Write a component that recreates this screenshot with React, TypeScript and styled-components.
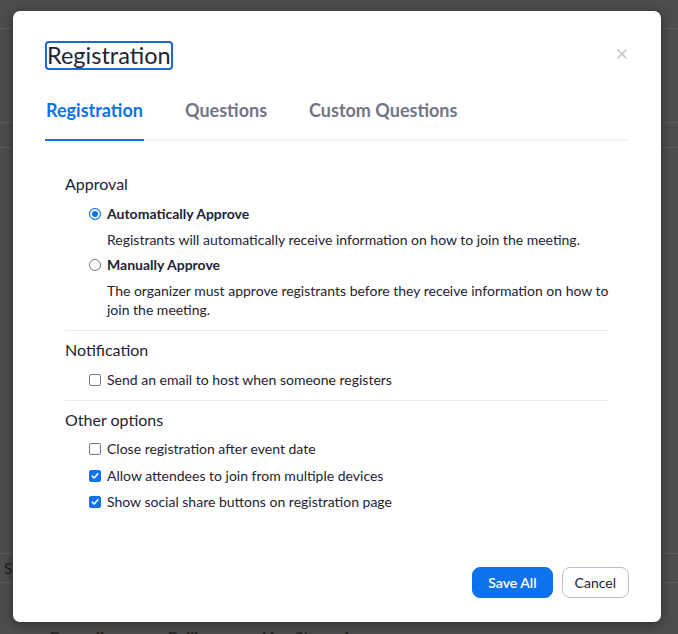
import React from 'react';
import styled, { createGlobalStyle } from 'styled-components';

const GlobalStyle = createGlobalStyle`
  html, body {
    margin: 0;
    padding: 0;
    background: #4d4d4d;
  }
  body {
    font-family: Lato, "Open Sans", "Liberation Sans", sans-serif;
    -webkit-font-smoothing: antialiased;
  }
`;

const Screen = styled.div`
  position: relative;
  width: 678px;
  height: 634px;
  overflow: hidden;
  background: #4e4e4e;
`;

/* dimmed page behind the dialog */
const BgRow = styled.div<{ $h: number; $line?: boolean; $bottom?: boolean }>`
  height: ${(p) => p.$h}px;
  box-sizing: border-box;
  border-bottom: ${(p) => (p.$line ? '1px solid #5e5e5e' : 'none')};
  display: flex;
  align-items: ${(p) => (p.$bottom ? 'flex-start' : 'center')};
  gap: 46px;
  padding-left: ${(p) => (p.$bottom ? 50 : 4)}px;
  padding-top: ${(p) => (p.$bottom ? 44 : 0)}px;
  font-size: 15px;
  color: #1f1f1f;
`;

const BgTab = styled.span`
  font-size: 16px;
  font-weight: 700;
  line-height: 20px;
  color: #262626;
`;

const Modal = styled.div`
  position: absolute;
  top: 11px;
  left: 13px;
  width: 648px;
  height: 611px;
  box-sizing: border-box;
  padding: 30px 32px 24px;
  background: #fff;
  border-radius: 7px;
  box-shadow: 0 2px 14px rgba(0, 0, 0, 0.45);
  display: flex;
  flex-direction: column;
  color: #232333;
`;

const Header = styled.div`
  display: flex;
  justify-content: space-between;
  align-items: flex-start;
`;

const Title = styled.h1`
  margin: 0;
  display: inline-block;
  font-size: 23.5px;
  font-weight: 400;
  line-height: 25px;
  padding: 0;
  border: 2px solid #1a66d2;
  border-radius: 4px;
  color: #232333;
`;

const Close = styled.button`
  border: none;
  background: none;
  padding: 0;
  margin: 7px 1px 0 0;
  width: 12px;
  height: 12px;
  display: flex;
  cursor: pointer;
`;

const TabBar = styled.div`
  margin-top: 17px;
  display: flex;
  gap: 40px;
  border-bottom: 2px solid #f2f2f4;
`;

const Tab = styled.div<{ $active?: boolean }>`
  font-size: 18px;
  line-height: 22px;
  font-weight: 700;
  padding: 12px 1px 18px;
  margin-bottom: -2px;
  color: ${(p) => (p.$active ? '#0e72ed' : '#747487')};
  border-bottom: 2px solid ${(p) => (p.$active ? '#0e72ed' : 'transparent')};
`;

const Body = styled.div`
  margin: 33px 20px 0;
`;

const Section = styled.div<{ $first?: boolean }>`
  padding: ${(p) => (p.$first ? '0 0 11px' : '9px 0 10px')};
  border-top: ${(p) => (p.$first ? 'none' : '1px solid #ebebee')};
`;

const SectionTitle = styled.div<{ $mb?: number }>`
  font-size: 16px;
  line-height: 20px;
  margin-bottom: ${(p) => p.$mb ?? 10}px;
`;

const Option = styled.label<{ $bold?: boolean; $gap?: number }>`
  display: flex;
  align-items: center;
  gap: 6px;
  margin-left: 24px;
  margin-top: ${(p) => p.$gap ?? 0}px;
  font-size: 14px;
  line-height: 20px;
  font-weight: ${(p) => (p.$bold ? 700 : 400)};
`;

const Desc = styled.div`
  margin: 6px 0 0 42px;
  font-size: 14px;
  line-height: 19px;
`;

const RadioDot = styled.span<{ $on?: boolean }>`
  width: 12px;
  height: 12px;
  box-sizing: border-box;
  border-radius: 50%;
  border: 1px solid ${(p) => (p.$on ? '#0e72ed' : '#747487')};
  background: ${(p) => (p.$on ? '#0e72ed' : '#fff')};
  box-shadow: ${(p) => (p.$on ? 'inset 0 0 0 2px #fff' : 'none')};
  flex: none;
`;

const Box = styled.span<{ $on?: boolean }>`
  width: 12px;
  height: 12px;
  box-sizing: border-box;
  border-radius: 2px;
  border: 1px solid ${(p) => (p.$on ? '#0e72ed' : '#747487')};
  background: ${(p) => (p.$on ? '#0e72ed' : '#fff')};
  display: flex;
  align-items: center;
  justify-content: center;
  flex: none;
`;

const Footer = styled.div`
  margin-top: auto;
  display: flex;
  justify-content: flex-end;
  gap: 9px;
`;

const Button = styled.button<{ $primary?: boolean }>`
  height: 31px;
  box-sizing: border-box;
  padding: 0 ${(p) => (p.$primary ? 15 : 12)}px;
  border-radius: 8px;
  font-family: inherit;
  font-size: 14px;
  font-weight: ${(p) => (p.$primary ? 600 : 400)};
  border: 1px solid ${(p) => (p.$primary ? '#0e72ed' : '#bdbdcc')};
  background: ${(p) => (p.$primary ? '#0e72ed' : '#fff')};
  color: ${(p) => (p.$primary ? '#fff' : '#232333')};
  cursor: pointer;
`;

const Check = () => (
  <svg width="8" height="8" viewBox="0 0 8 8">
    <path d="M1.2 4.2 L3.2 6 L6.8 1.8" fill="none" stroke="#fff" strokeWidth="1.6" strokeLinecap="round" strokeLinejoin="round" />
  </svg>
);

const CheckOption: React.FC<{ on?: boolean; gap?: number; children: React.ReactNode }> = ({ on, gap, children }) => (
  <Option $gap={gap}>
    <Box $on={on}>{on && <Check />}</Box>
    {children}
  </Option>
);

const App: React.FC = () => {
  return (
    <Screen>
      <GlobalStyle />
      <BgRow $h={29} $line />
      <BgRow $h={94} $line />
      <BgRow $h={25} $line />
      <BgRow $h={406} $line />
      <BgRow $h={29} $line>S</BgRow>
      <BgRow $h={80} $bottom>
        <BgTab>Recording</BgTab>
        <BgTab>Polling</BgTab>
        <BgTab>Live Streaming</BgTab>
      </BgRow>

      <Modal>
        <Header>
          <Title>Registration</Title>
          <Close aria-label="close">
            <svg width="12" height="12" viewBox="0 0 12 12">
              <path d="M2 2 L10 10 M10 2 L2 10" stroke="#c4c4c8" strokeWidth="1.6" strokeLinecap="round" />
            </svg>
          </Close>
        </Header>

        <TabBar>
          <Tab $active>Registration</Tab>
          <Tab>Questions</Tab>
          <Tab>Custom Questions</Tab>
        </TabBar>

        <Body>
          <Section $first>
            <SectionTitle>Approval</SectionTitle>
            <Option $bold>
              <RadioDot $on />
              Automatically Approve
            </Option>
            <Desc>Registrants will automatically receive information on how to join the meeting.</Desc>
            <Option $bold $gap={6}>
              <RadioDot />
              Manually Approve
            </Option>
            <Desc>
              The organizer must approve registrants before they receive information on how to join the meeting.
            </Desc>
          </Section>

          <Section>
            <SectionTitle>Notification</SectionTitle>
            <CheckOption>Send an email to host when someone registers</CheckOption>
          </Section>

          <Section>
            <SectionTitle $mb={9}>Other options</SectionTitle>
            <CheckOption>Close registration after event date</CheckOption>
            <CheckOption on gap={7}>Allow attendees to join from multiple devices</CheckOption>
            <CheckOption on gap={6}>Show social share buttons on registration page</CheckOption>
          </Section>
        </Body>

        <Footer>
          <Button $primary>Save All</Button>
          <Button>Cancel</Button>
        </Footer>
      </Modal>
    </Screen>
  );
};

export default App;
